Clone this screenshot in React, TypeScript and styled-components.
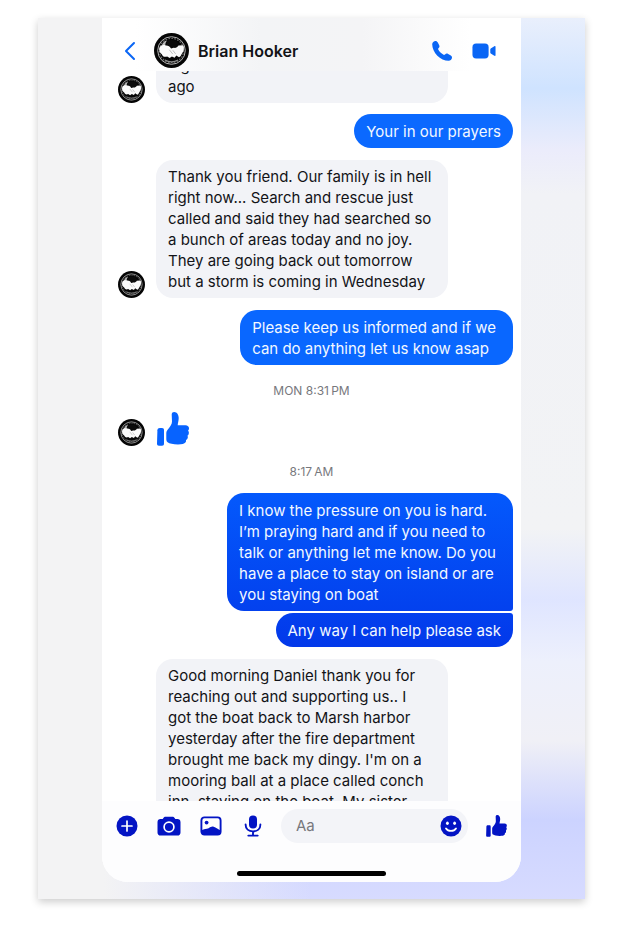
import React, { useLayoutEffect, useRef } from "react";
import styled, { createGlobalStyle, css } from "styled-components";

const GlobalStyle = createGlobalStyle`
  * { box-sizing: border-box; }
  body {
    margin: 0;
    background: #fff;
    color: #121317;
    font-family: Inter, "Liberation Sans", sans-serif;
    -webkit-font-smoothing: antialiased;
  }
`;

const Page = styled.div`
  height: 100vh;
  min-height: 480px;
  display: flex;
  padding: 18px 35px 29px 38px;
`;

const Backdrop = styled.div`
  flex: 1;
  min-width: 0;
  display: flex;
  padding: 0 64px 17px;
  background:
    linear-gradient(90deg, #f3f3f4 12%, rgba(243, 243, 244, 0) 50%),
    linear-gradient(
      180deg,
      #e9effc 0%,
      #cfe3ff 8%,
      #ebecfb 15%,
      #f1f2f6 20%,
      #f2f3f5 58%,
      #dfe5ff 66%,
      #edf0fc 73%,
      #f0f0f6 82%,
      #ccd3ff 91%,
      #d7dbff 100%
    );
  box-shadow: 0 3px 8px rgba(0, 0, 0, 0.2);
`;

const Screen = styled.main`
  flex: 1;
  min-width: 0;
  display: flex;
  flex-direction: column;
  overflow: hidden;
  background: #fff;
  border-radius: 0 0 26px 26px;
`;

const Header = styled.header`
  display: flex;
  align-items: center;
  padding: 15px 25px 3px 16px;
  background: linear-gradient(90deg, #fff 8%, #f3f4f6 38%, #f4f4f6 62%, #fff 88%);
`;

const IconButton = styled.button<{ $color?: string }>`
  flex: none;
  display: flex;
  align-items: center;
  justify-content: center;
  width: 24px;
  height: 24px;
  padding: 0;
  border: 0;
  background: none;
  color: ${(p) => p.$color ?? "#0a66f5"};
  cursor: pointer;
`;

const Contact = styled.div`
  flex: 1;
  min-width: 0;
  display: flex;
  align-items: center;
  gap: 9px;
  margin-left: 12px;
`;

const ContactName = styled.h1`
  margin: 0;
  font-size: 16px;
  line-height: 20px;
  font-weight: 600;
  white-space: nowrap;
`;

const CallActions = styled.div`
  display: flex;
  gap: 18px;
`;

const Thread = styled.section`
  flex: 1;
  min-height: 0;
  overflow-y: auto;
  scrollbar-width: none;
  padding: 0 8px 12px;
`;

const Row = styled.div<{ $sent?: boolean; $gap?: number }>`
  display: flex;
  align-items: flex-end;
  justify-content: ${(p) => (p.$sent ? "flex-end" : "flex-start")};
  gap: 11px;
  margin-top: ${(p) => p.$gap ?? 0}px;
  padding-left: 8px;
`;

const AvatarSlot = styled.div`
  flex: none;
  display: flex;
  width: 27px;
`;

const Bubble = styled.p<{ $fill?: string; $joined?: "above" | "below"; $multiline?: boolean }>`
  margin: 0;
  padding: 6px 12px;
  border-radius: 17px;
  background: #f2f3f7;
  font-size: 15px;
  line-height: 21px;
  white-space: pre-line;
  ${(p) =>
    p.$fill
      ? css`
          padding: 7px ${p.$multiline ? 17 : 12}px 6px 12px;
          background: ${p.$fill};
          color: #f2f8ff;
        `
      : css`
          width: 74%;
        `}
  ${(p) => p.$joined === "below" && "border-bottom-right-radius: 3px;"}
  ${(p) => p.$joined === "above" && "border-top-right-radius: 3px;"}
`;

const Timestamp = styled.time`
  display: block;
  padding: 18px 0 13px;
  font-size: 12px;
  line-height: 16px;
  color: #77787d;
  text-align: center;
`;

const Footer = styled.footer`
  display: flex;
  flex-direction: column;
  align-items: center;
  gap: 28px;
  padding: 8px 13px 6px;
  background: #fdfdfe;
`;

const Composer = styled.form`
  align-self: stretch;
  display: flex;
  align-items: center;
  gap: 16px;
`;

const Tools = styled.div`
  display: flex;
  gap: 18px;
`;

const Field = styled.label`
  flex: 1;
  min-width: 0;
  display: flex;
  align-items: center;
  height: 34px;
  padding: 0 5px 0 15px;
  border-radius: 17px;
  background: #f3f4f8;
`;

const TextInput = styled.input`
  flex: 1;
  min-width: 0;
  padding: 0;
  border: 0;
  outline: 0;
  background: none;
  font: 400 15px/20px Inter, "Liberation Sans", sans-serif;
  color: #121317;
  &::placeholder {
    color: #77787d;
    opacity: 1;
  }
`;

const HomeBar = styled.div`
  width: 38%;
  height: 5px;
  border-radius: 3px;
  background: #000;
`;

const NAVY = "#0314c4";

function Avatar({ size }: { size: number }) {
  return (
    <svg width={size} height={size} viewBox="0 0 34 34" role="img" aria-label="Brian Hooker">
      <circle cx="17" cy="17" r="17" fill="#050505" />
      <circle cx="17" cy="17" r="13.4" fill="none" stroke="#c4c4c4" strokeWidth="0.9" />
      <circle cx="17" cy="17" r="11.8" fill="none" stroke="#6a6a6a" strokeWidth="1.2" strokeDasharray="1.6 1.3" />
      <path d="M7.4 12.5C8.2 9.6 10.2 7.6 12.6 7.2C11.2 9.2 10.8 10.8 11 12.6Z" fill="#b8b8b8" />
      <path d="M13 7.6C15 6.6 19 6.6 21.8 7.8L25.5 12.2L20 15L15.5 14L12 12.4Z" fill="#0b0b0b" />
      <path
        d="M5.3 14.2C6.4 11.8 9 11.3 11.4 12.1C13.6 11.9 15.4 13 16.6 15L19.2 14.4C21 14.9 22.6 14 23.8 12.2L28.5 11.9C29.6 14.4 29 17.2 27.7 19.2C26.4 20.7 26.2 23.2 24.3 23.5L21.7 21.8L20 24L17.4 22.8L15.2 24.3L12.8 22.8C10.4 23.8 8.2 22.8 7.6 20.6C5.5 19.6 4.6 16.8 5.3 14.2Z"
        fill="#fafafa"
      />
      <path d="M14.8 16.2L18.2 20.4M18.3 16.8L21 20.3" stroke="#b5b5b5" strokeWidth="0.8" fill="none" />
      <path d="M10.5 26.2C14.5 28.4 19.5 28.4 23.5 26.2" stroke="#8a8a8a" strokeWidth="1.2" fill="none" />
    </svg>
  );
}

function ThumbIcon({ width, height }: { width: number; height: number }) {
  return (
    <svg width={width} height={height} viewBox="0 0 32 34" fill="currentColor" aria-hidden="true">
      <path d="M2.8 16H5C6.3 16 7 16.7 7 18V31.6C7 33 6.3 33.8 5 33.8H1.9C.7 33.8 0 33 0 31.8L.4 18.2C.5 16.8 1.4 16 2.8 16Z" />
      <path d="M9.3 21C9.3 17.6 14.8 15 15 9.6L14.7 2.6C14.7.7 15.9 0 17.2 0C20 0 21.7 2.8 21.7 6C21.7 9 20.7 11.3 20.7 13.2H28.5C30.6 13.2 32 14.5 32 16.3C32 17.5 31.6 18.3 31 18.8C31.8 19.5 32 20.6 31.8 21.6C31.6 22.8 31.1 23.4 30.5 23.8C30.9 24.6 31 25.6 30.5 26.5C30.1 27.3 29.6 27.8 29 28C29.2 29 29 29.9 28.4 30.6C27.4 31.9 25 32.4 21 32.4C16 32.4 12.4 31.6 10.6 30.2C9.4 29.3 9.3 28 9.3 26.5Z" />
    </svg>
  );
}

const LikeMessage = styled.span`
  display: flex;
  margin-left: 1px;
  color: #0763ff;
`;

const BackIcon = () => (
  <svg width="12" height="20" viewBox="0 0 12 20" fill="none" stroke="currentColor" strokeWidth="2" strokeLinecap="round" strokeLinejoin="round" aria-hidden="true">
    <path d="M10 2L2 10L10 18" />
  </svg>
);

const PhoneIcon = () => (
  <svg width="22" height="22" viewBox="0 0 22 22" fill="currentColor" aria-hidden="true">
    <path d="M1.2 4.2C1.2 2.3 3 1 4.5 1C5.6 1 6.2 1.6 6.8 2.6L8.1 4.9C8.8 6.2 8.5 7 7.6 8C7 8.7 7 9.1 7.4 9.8C8.5 11.7 10.3 13.5 12.2 14.6C12.9 15 13.3 15 14 14.4C15 13.5 15.8 13.2 17.1 13.9L19.4 15.2C20.4 15.8 21 16.4 21 17.5C21 19.1 19.6 20.8 17.6 20.8C9.5 20.8 1.2 12.5 1.2 4.2Z" />
  </svg>
);

const VideoIcon = () => (
  <svg width="26" height="18" viewBox="0 0 26 18" fill="currentColor" aria-hidden="true">
    <rect x="0.5" y="1" width="17.5" height="16" rx="4" />
    <path d="M19.8 7.4C19.8 6.7 20.1 6.3 20.7 6L24.2 3.8C25 3.4 25.5 3.7 25.5 4.5V13.5C25.5 14.3 25 14.6 24.2 14.2L20.7 12C20.1 11.7 19.8 11.3 19.8 10.6Z" />
  </svg>
);

const PlusIcon = () => (
  <svg width="22" height="22" viewBox="0 0 22 22" aria-hidden="true">
    <circle cx="11" cy="11" r="10.5" fill="currentColor" />
    <path d="M11 6V16M6 11H16" stroke="#fff" strokeWidth="1.7" strokeLinecap="round" />
  </svg>
);

const CameraIcon = () => (
  <svg width="24" height="20" viewBox="0 0 24 20" aria-hidden="true">
    <path d="M8.7 .7H15.3C16.4 .7 17 1.1 17.6 2L18.3 3.1H20.4C22.3 3.1 23.5 4.3 23.5 6.2V16.4C23.5 18.4 22.3 19.5 20.4 19.5H3.6C1.7 19.5 .5 18.4 .5 16.4V6.2C.5 4.3 1.7 3.1 3.6 3.1H5.7L6.4 2C7 1.1 7.6 .7 8.7 .7Z" fill="currentColor" />
    <circle cx="12" cy="11" r="4.9" fill="none" stroke="#fff" strokeWidth="1.7" />
  </svg>
);

const PhotoIcon = () => (
  <svg width="22" height="20" viewBox="0 0 22 20" aria-hidden="true">
    <rect x="1.4" y="1.4" width="19.2" height="17.2" rx="3" fill="none" stroke="currentColor" strokeWidth="1.9" />
    <circle cx="6.6" cy="6.6" r="1.9" fill="currentColor" />
    <path d="M1.5 14.2C4 12.6 6.4 13.4 8.6 12.2C10.4 11.2 12 10.2 13.6 10.8C16 11.7 18.4 13.4 20.5 14.6V16.5C20.5 17.8 19.6 18.6 18.3 18.6H3.7C2.3 18.6 1.5 17.8 1.5 16.5Z" fill="currentColor" />
  </svg>
);

const MicIcon = () => (
  <svg width="18" height="22" viewBox="0 0 18 22" aria-hidden="true">
    <rect x="5" y=".5" width="8" height="13" rx="4" fill="currentColor" />
    <path d="M1.6 9.5C1.6 14 4.7 16.4 9 16.4S16.4 14 16.4 9.5M9 16.5V20.5M4.3 20.6H13.7" fill="none" stroke="currentColor" strokeWidth="1.9" strokeLinecap="round" />
  </svg>
);

const SmileIcon = () => (
  <svg width="22" height="22" viewBox="0 0 22 22" aria-hidden="true">
    <circle cx="11" cy="11" r="10.5" fill="currentColor" />
    <ellipse cx="7.4" cy="8.2" rx="1.4" ry="1.8" fill="#fff" />
    <ellipse cx="14.6" cy="8.2" rx="1.4" ry="1.8" fill="#fff" />
    <path d="M6 13.4C8.3 16.8 13.7 16.8 16 13.4" fill="none" stroke="#fff" strokeWidth="1.8" strokeLinecap="round" />
  </svg>
);

function Received({ text, gap, avatar = true }: { text: string; gap?: number; avatar?: boolean }) {
  return (
    <Row $gap={gap}>
      <AvatarSlot>{avatar && <Avatar size={27} />}</AvatarSlot>
      <Bubble>{text}</Bubble>
    </Row>
  );
}

function Sent(props: { text: string; gap?: number; fill: string; joined?: "above" | "below" }) {
  return (
    <Row $sent $gap={props.gap}>
      <Bubble $fill={props.fill} $joined={props.joined} $multiline={props.text.includes("\n")}>
        {props.text}
      </Bubble>
    </Row>
  );
}

export default function App() {
  const thread = useRef<HTMLElement>(null);

  // Open the thread one line down from its first message.
  useLayoutEffect(() => {
    if (thread.current) thread.current.scrollTop = 22;
  }, []);

  return (
    <>
      <GlobalStyle />
      <Page>
        <Backdrop>
          <Screen>
            <Header>
              <IconButton type="button" aria-label="Back">
                <BackIcon />
              </IconButton>
              <Contact>
                <Avatar size={35} />
                <ContactName>Brian Hooker</ContactName>
              </Contact>
              <CallActions>
                <IconButton type="button" aria-label="Call">
                  <PhoneIcon />
                </IconButton>
                <IconButton type="button" aria-label="Video call">
                  <VideoIcon />
                </IconButton>
              </CallActions>
            </Header>

            <Thread ref={thread} aria-label="Messages">
              <Received text={"night\nago"} />
              <Sent gap={11} fill="#0b69ff" text="Your in our prayers" />
              <Received
                gap={12}
                text={
                  "Thank you friend. Our family is in hell\nright now... Search and rescue just\ncalled and said they had searched so\na bunch of areas today and no joy.\nThey are going back out tomorrow\nbut a storm is coming in Wednesday"
                }
              />
              <Sent
                gap={12}
                fill="#0967ff"
                text={"Please keep us informed and if we\ncan do anything let us know asap"}
              />
              <Timestamp>MON 8:31{"\u2009"}PM</Timestamp>
              <Row>
                <AvatarSlot>
                  <Avatar size={27} />
                </AvatarSlot>
                <LikeMessage role="img" aria-label="Thumbs up">
                  <ThumbIcon width={32} height={34} />
                </LikeMessage>
              </Row>
              <Timestamp>8:17{"\u2009"}AM</Timestamp>
              <Sent
                joined="below"
                fill="linear-gradient(180deg, #0459fc, #0341ee)"
                text={
                  "I know the pressure on you is hard.\nI’m praying hard and if you need to\ntalk or anything let me know. Do you\nhave a place to stay on island or are\nyou staying on boat"
                }
              />
              <Sent
                gap={2}
                joined="above"
                fill="linear-gradient(180deg, #0340ee, #0238ea)"
                text="Any way I can help please ask"
              />
              <Received
                gap={12}
                avatar={false}
                text={
                  "Good morning Daniel thank you for\nreaching out and supporting us.. I\ngot the boat back to Marsh harbor\nyesterday after the fire department\nbrought me back my dingy. I'm on a\nmooring ball at a place called conch\ninn, staying on the boat. My sister"
                }
              />
            </Thread>

            <Footer>
              <Composer onSubmit={(e: React.FormEvent) => e.preventDefault()}>
                <Tools>
                  <IconButton type="button" $color={NAVY} aria-label="More">
                    <PlusIcon />
                  </IconButton>
                  <IconButton type="button" $color={NAVY} aria-label="Camera">
                    <CameraIcon />
                  </IconButton>
                  <IconButton type="button" $color={NAVY} aria-label="Photos">
                    <PhotoIcon />
                  </IconButton>
                  <IconButton type="button" $color={NAVY} aria-label="Voice message">
                    <MicIcon />
                  </IconButton>
                </Tools>
                <Field>
                  <TextInput type="text" placeholder="Aa" aria-label="Message" />
                  <IconButton type="button" $color={NAVY} aria-label="Emoji">
                    <SmileIcon />
                  </IconButton>
                </Field>
                <IconButton type="button" $color={NAVY} aria-label="Send like">
                  <ThumbIcon width={21} height={22} />
                </IconButton>
              </Composer>
              <HomeBar />
            </Footer>
          </Screen>
        </Backdrop>
      </Page>
    </>
  );
}
